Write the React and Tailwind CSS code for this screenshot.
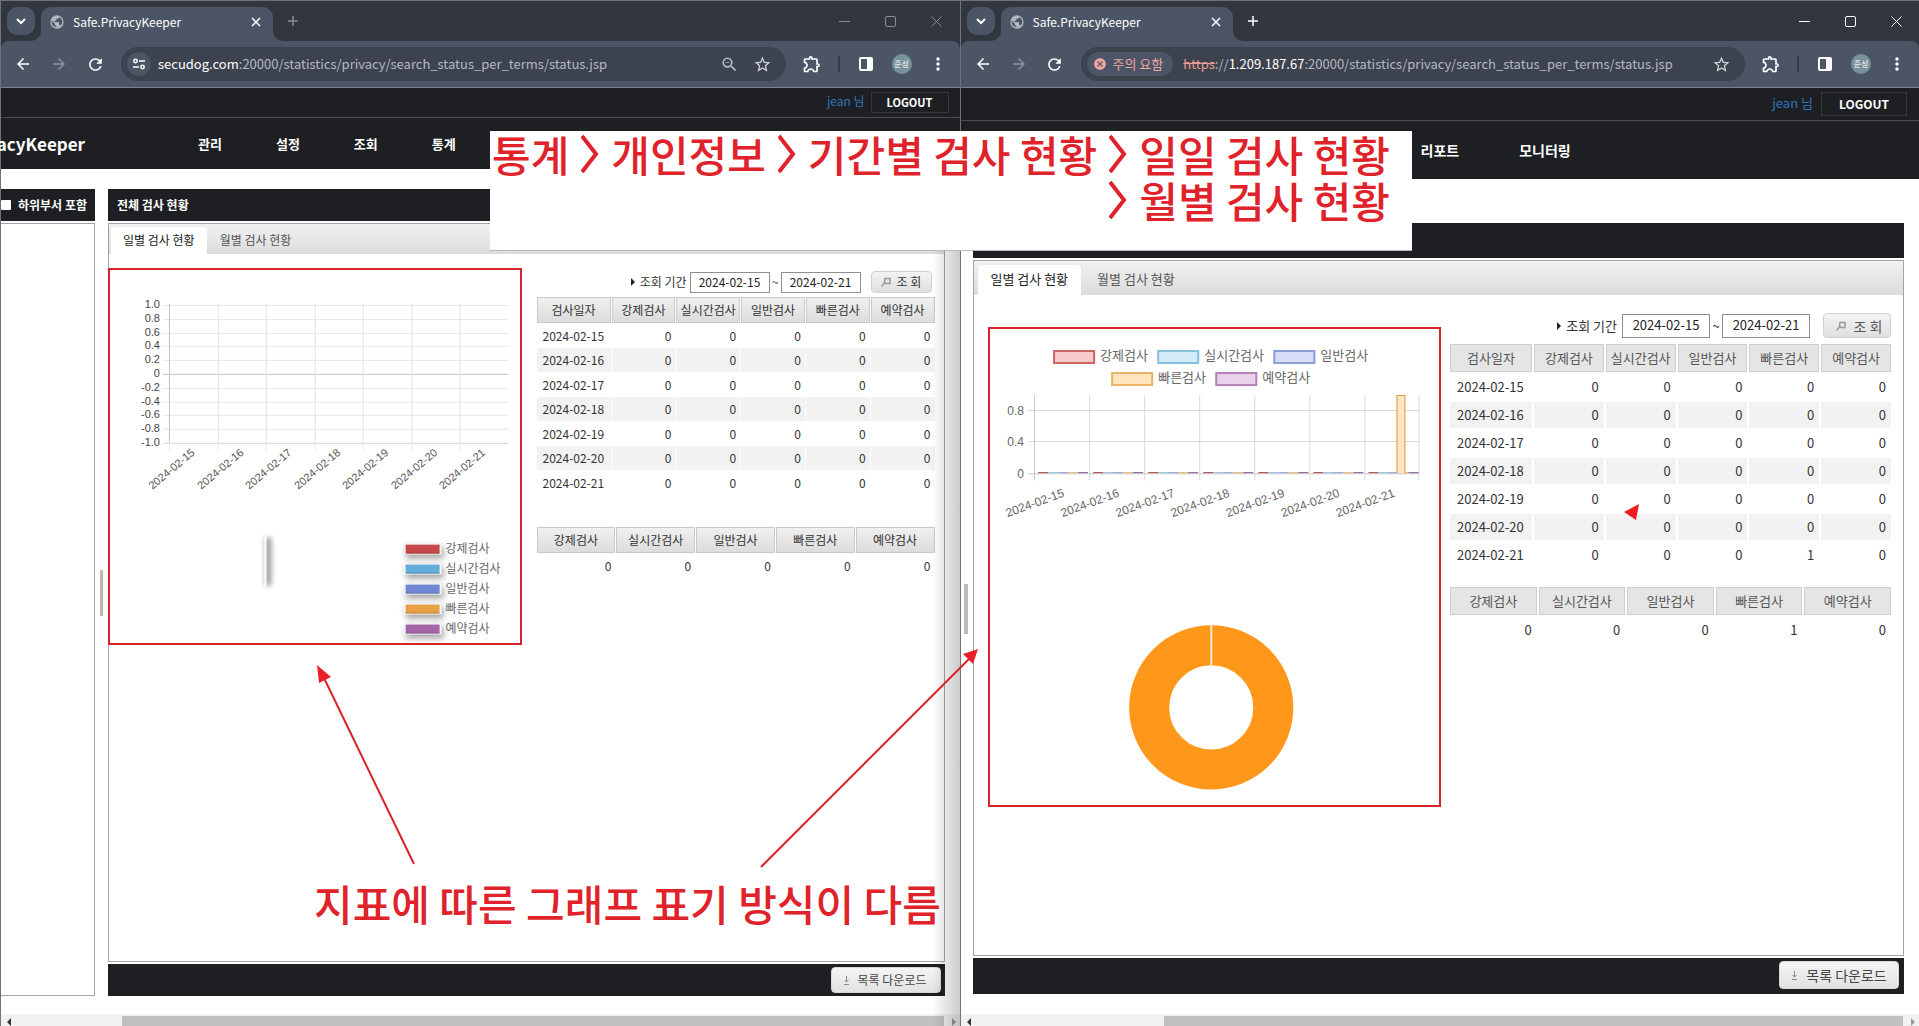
import { useState } from "react";
import { clsx } from "clsx";
import {
  MdArrowBack,
  MdArrowForward,
  MdRefresh,
  MdStarBorder,
  MdZoomOut,
  MdMoreVert,
  MdOutlineExtension,
  MdCancel,
} from "react-icons/md";

const dates = [
  "2024-02-15",
  "2024-02-16",
  "2024-02-17",
  "2024-02-18",
  "2024-02-19",
  "2024-02-20",
  "2024-02-21",
];

const scanTypes = ["강제검사", "실시간검사", "일반검사", "빠른검사", "예약검사"];

const oldColors = ["#c8474a", "#62add9", "#7088d4", "#e8a044", "#a566a8"];

const newColors = [
  { fill: "#f9cccc", stroke: "#cc6666" },
  { fill: "#d4ecfa", stroke: "#86c0dc" },
  { fill: "#d6def6", stroke: "#8b9cd6" },
  { fill: "#ffe4bd", stroke: "#eab264" },
  { fill: "#ead3ea", stroke: "#b480b8" },
];

const TabShape = () => (
  <>
    <svg viewBox="0 0 10 10" className="absolute bottom-0 -left-2.5 size-2.5 fill-[#4c5565]">
      <path d="M10 0v10H0A10 10 0 0 0 10 0z" />
    </svg>
    <svg viewBox="0 0 10 10" className="absolute -right-2.5 bottom-0 size-2.5 fill-[#4c5565]">
      <path d="M0 0v10h10A10 10 0 0 1 0 0z" />
    </svg>
  </>
);

const BrowserChrome = ({ active, children, tools }) => (
  <div className="bg-[#32363f] text-white">
    <div className="flex h-10 pl-1.5 pt-1.5">
      <button
        aria-label="탭 검색"
        className="flex size-7 items-center justify-center rounded-[10px] bg-[#4c5565]"
      >
        <svg viewBox="0 0 10 10" className="size-2.5 fill-none stroke-white stroke-2">
          <path d="M1 3l4 4 4-4" />
        </svg>
      </button>
      <div className="relative ml-1.5 flex h-[34px] w-[232px] items-center rounded-t-[10px] bg-[#4c5565] pb-1 pl-2 pr-3">
        <TabShape />
        <svg viewBox="0 0 24 24" className="size-4 fill-[#b1b6bf]">
          <path d="M12 2a10 10 0 1 0 0 20 10 10 0 0 0 0-20zm-1 17.9A8 8 0 0 1 4.2 10.200L9 15v1a2 2 0 0 0 2 2zm6.900-2.500A2 2 0 0 0 16 16h-1v-3a1 1 0 0 0-1-1H8v-2h2a1 1 0 0 0 1-1V7h2a2 2 0 0 0 2-2v-.4a8 8 0 0 1 2.900 12.800z" />
        </svg>
        <span className="ml-2 flex-1 text-xs">Safe.PrivacyKeeper</span>
        <button aria-label="탭 닫기">
          <svg viewBox="0 0 10 10" className="size-2.5 fill-none stroke-white stroke-[1.5]">
            <path d="M1 1l8 8M9 1l-8 8" />
          </svg>
        </button>
      </div>
      <button aria-label="새 탭" className="ml-3.5 flex h-7 items-center">
        <svg
          viewBox="0 0 12 12"
          className={clsx(
            "size-3 fill-none stroke-[1.5]",
            active ? "stroke-white" : "stroke-[#878b93]"
          )}
        >
          <path d="M6 1v10M1 6h10" />
        </svg>
      </button>
      <div
        className={clsx(
          "ml-auto flex h-7 fill-none",
          active ? "stroke-white" : "stroke-[#8a8e97]"
        )}
      >
        <button aria-label="최소화" className="flex w-[46px] items-center justify-center">
          <svg viewBox="0 0 11 11" className="size-[11px]">
            <path d="M0 5.500h11" />
          </svg>
        </button>
        <button aria-label="최대화" className="flex w-[46px] items-center justify-center">
          <svg viewBox="0 0 11 11" className="size-[11px]">
            <rect x="0.500" y="0.500" width="10" height="10" rx="1.500" />
          </svg>
        </button>
        <button aria-label="닫기" className="flex w-[46px] items-center justify-center">
          <svg viewBox="0 0 11 11" className="size-[11px]">
            <path d="M0.500 0.500l10 10M10.500 0.500l-10 10" />
          </svg>
        </button>
      </div>
    </div>
    <div className="flex h-[47px] items-center rounded-t-lg border-b border-[#7d828b] bg-[#4c5565] px-1">
      <button aria-label="뒤로" className="flex w-9 justify-center">
        <MdArrowBack className="size-[18px]" />
      </button>
      <button aria-label="앞으로" className="flex w-9 justify-center text-[#8b919c]">
        <MdArrowForward className="size-[18px]" />
      </button>
      <button aria-label="새로고침" className="flex w-9 justify-center">
        <MdRefresh className="size-[19px]" />
      </button>
      <div className="mx-2 flex h-[34px] min-w-0 flex-1 items-center rounded-full bg-[#3c424e] px-1.5 text-[13px] text-[#b4b9c3]">
        {children}
        <div className="ml-auto flex items-center gap-3.5 pr-2">
          {tools}
          <button aria-label="북마크">
            <MdStarBorder className="size-[19px] text-[#d0d3d9]" />
          </button>
        </div>
      </div>
      <button aria-label="확장 프로그램" className="flex w-9 justify-center">
        <MdOutlineExtension className="size-5" />
      </button>
      <span className="mx-2 h-4 w-0.5 bg-[#343a46]" />
      <button aria-label="측면 패널" className="flex w-9 justify-center">
        <svg viewBox="0 0 14 14" className="size-3.5">
          <rect x="1" y="1" width="12" height="12" rx="1" className="fill-none stroke-white stroke-2" />
          <path d="M8 1h5v12H8z" fill="#fff" />
        </svg>
      </button>
      <button aria-label="프로필" className="flex w-9 justify-center">
        <span className="flex size-5 items-center justify-center rounded-full bg-[#78929c] text-[8px]">
          준성
        </span>
      </button>
      <button aria-label="메뉴" className="flex w-9 justify-center">
        <MdMoreVert className="size-5" />
      </button>
    </div>
  </div>
);

const UserBar = ({ large }) => (
  <div
    className={clsx(
      "flex justify-end border-b border-[#4b4c4f] pt-1",
      large ? "h-[33px] gap-2 pr-3 text-[13px]" : "h-[30px] gap-1.5 pr-[11px] text-xs"
    )}
  >
    <span className={clsx("text-[#2e74bd]", large ? "leading-[22px]" : "leading-[18px]")}>
      jean 님
    </span>
    <button
      className={clsx(
        "border border-[#35373b] font-bold text-white",
        large ? "h-6 w-[86px] text-xs" : "h-[21px] w-[78px] text-[11px]"
      )}
    >
      LOGOUT
    </button>
  </div>
);

const Tabs = ({ large }) => {
  const [tab, setTab] = useState("일별 검사 현황");

  return (
    <div
      className={clsx(
        "flex items-end bg-linear-to-b from-[#f1f1f1] to-[#dcdcdc]",
        large ? "h-[34px] gap-[3px] pl-1 text-[13px]" : "h-[30px] gap-px pl-0.5 text-xs"
      )}
    >
      {["일별 검사 현황", "월별 검사 현황"].map((name) => (
        <button
          key={name}
          onClick={() => setTab(name)}
          className={clsx(
            "rounded-t pb-0.5",
            large ? "h-[30px] px-[13px]" : "h-[27px] px-3",
            tab === name ? "bg-white text-[#222]" : "text-[#555]"
          )}
        >
          {name}
        </button>
      ))}
    </div>
  );
};

const SearchBar = ({ large }) => {
  const id = large ? "new" : "old";
  const input = clsx(
    "border border-[#8f8f8f] bg-white pb-0.5 text-center text-[#222] outline-none",
    large ? "h-6 w-[88px]" : "h-[21px] w-20"
  );

  return (
    <form
      className={clsx(
        "flex items-center justify-end text-[#333]",
        large ? "mb-1 mr-0.5 h-[25px] text-[13px]" : "mb-1 mr-1 h-[22px] text-xs"
      )}
      onSubmit={(e) => e.preventDefault()}
    >
      <svg viewBox="0 0 4 8" className="mr-[5px] h-2 w-1 fill-[#222]">
        <path d="M0 0l4 4-4 4z" />
      </svg>
      <label htmlFor={`${id}-from`} className={large ? "mr-[5px]" : "mr-[3px]"}>
        조회 기간
      </label>
      <input id={`${id}-from`} defaultValue="2024-02-15" className={input} />
      <span className={large ? "w-3 text-center" : "w-[11px] text-center"}>~</span>
      <input aria-label="종료일" defaultValue="2024-02-21" className={input} />
      <button
        className={clsx(
          "flex items-center justify-center rounded border border-[#d2d2d2] bg-linear-to-b from-[#f3f3f3] to-[#dfdfdf]",
          large
            ? "ml-[13px] h-[25px] w-[68px] gap-2 pl-1 text-sm text-[#555]"
            : "ml-2.5 h-[22px] w-[61px] gap-1.5 text-xs"
        )}
      >
        <svg viewBox="0 0 10 10" className="size-2.5 fill-none stroke-[#999] stroke-[1.5]">
          <path d="M4 1.500h5v5H5L3.500 5z M3.500 6L0.500 9.500" />
        </svg>
        조 회
      </button>
    </form>
  );
};

const headCell = (large) =>
  clsx(
    "border font-normal",
    large
      ? "h-7 border-[#cfcfcf] bg-[#e5e5e5] text-[#555]"
      : "h-[26px] border-[#c9c9c9] bg-linear-to-b from-[#f0f0f0] to-[#dcdcdc] text-[#333]"
  );

const DailyTable = ({ large, rows }) => (
  <table
    className={clsx(
      "w-full table-fixed border-separate whitespace-nowrap text-[#333]",
      large ? "border-spacing-[2px] text-[13px]" : "border-spacing-x-[1px] border-spacing-y-0 text-xs"
    )}
  >
    <thead>
      <tr>
        <th className={clsx(headCell(large), large ? "w-[82px]" : "w-[74px]")}>검사일자</th>
        {scanTypes.map((type) => (
          <th key={type} className={headCell(large)}>
            {type}
          </th>
        ))}
      </tr>
    </thead>
    <tbody>
      {rows.map((row) => (
        <tr
          key={row.date}
          className={clsx("even:*:bg-[#f2f2f2]", large ? "h-[26px]" : "h-6 odd:h-[25px]")}
        >
          <td className={large ? "pl-[7px]" : "pl-1.5"}>{row.date}</td>
          {row.counts.map((count, i) => (
            <td key={scanTypes[i]} className={clsx("text-right", large ? "pr-[5px]" : "pr-1")}>
              {count}
            </td>
          ))}
        </tr>
      ))}
    </tbody>
  </table>
);

const TotalTable = ({ large, counts }) => (
  <table
    className={clsx(
      "w-full table-fixed border-separate whitespace-nowrap text-[#333]",
      large
        ? "mt-[15px] border-spacing-[2px] text-[13px]"
        : "mt-8 border-spacing-x-[1px] border-spacing-y-0 text-xs"
    )}
  >
    <thead>
      <tr>
        {scanTypes.map((type) => (
          <th key={type} className={headCell(large)}>
            {type}
          </th>
        ))}
      </tr>
    </thead>
    <tbody>
      <tr className={large ? "h-[26px]" : "h-[25px]"}>
        {counts.map((count, i) => (
          <td key={scanTypes[i]} className={clsx("text-right", large ? "pr-[5px]" : "pr-1")}>
            {count}
          </td>
        ))}
      </tr>
    </tbody>
  </table>
);

// Old server: empty line chart with an empty pie below
const OldChart = () => (
  <svg viewBox="0 0 410 373" className="w-full font-['Liberation_Sans']">
    <defs>
      <filter id="soft" x="-50%" y="-80%" width="200%" height="260%">
        <feGaussianBlur stdDeviation="3" />
      </filter>
      <filter id="pieShadow" x="-300%" y="-20%" width="700%" height="140%">
        <feGaussianBlur stdDeviation="2.500" />
      </filter>
    </defs>
    {Array.from({ length: 11 }, (_, i) => {
      const y = 35.5 + Math.round(i * 13.8);
      const value = (10 - i * 2) / 10;
      return (
        <g key={i}>
          <path
            d={`M53 ${y}H399`}
            stroke={i === 5 ? "#c4c4c4" : i === 10 ? "#d2d2d2" : "#e8e8e8"}
          />
          <text x="50" y={y + 3} textAnchor="end" fontSize="11" fill="#444">
            {value === 0 ? "0" : value.toFixed(1)}
          </text>
        </g>
      );
    })}
    {dates.map((date, i) => {
      const x = 59.5 + Math.round(i * 48.5);
      return (
        <g key={date}>
          <path d={`M${x} 34V173`} stroke={i === 0 ? "#c4c4c4" : "#e2e2e2"} />
          <path d={`M${x} 173V182`} stroke="#ececec" />
          <text
            transform={`translate(${x + 26} 184) rotate(-40)`}
            textAnchor="end"
            fontSize="11"
            fill="#555"
          >
            {date}
          </text>
        </g>
      );
    })}
    <rect x="155" y="268" width="7" height="48" fill="#000" opacity="0.350" filter="url(#pieShadow)" />
    <path d="M155.500 265v52" stroke="#fff" strokeWidth="2" />
    {scanTypes.map((type, i) => {
      const y = 275 + i * 20;
      return (
        <g key={type}>
          <rect x="296" y={y + 2} width="38" height="12" fill="#000" opacity="0.350" filter="url(#soft)" />
          <rect x="294" y={y - 1} width="38" height="11" fill="#f2f4f8" />
          <rect x="296" y={y} width="34" height="9" fill={oldColors[i]} />
          <path d={`M296 ${y + 8.500}h34`} stroke="#000" opacity="0.200" />
          <text
            x="336"
            y={y + 8}
            fontSize="12"
            fill="#666"
            className="font-['Noto_Sans_CJK_KR']"
          >
            {type}
          </text>
        </g>
      );
    })}
  </svg>
);

const legendSpots = [
  { x: 63, y: 21 },
  { x: 167, y: 21 },
  { x: 283, y: 21 },
  { x: 121, y: 43 },
  { x: 225, y: 43 },
];

// New server: bar chart with a doughnut below
const NewChart = () => (
  <svg viewBox="0 0 449 475" className="w-full font-['Liberation_Sans']">
    {scanTypes.map((type, i) => (
      <g key={type}>
        <rect
          x={legendSpots[i].x + 1}
          y={legendSpots[i].y + 1}
          width="40"
          height="12"
          fill={newColors[i].fill}
          stroke={newColors[i].stroke}
          strokeWidth="2"
        />
        <text
          x={legendSpots[i].x + 47}
          y={legendSpots[i].y + 10}
          fontSize="13"
          fill="#666"
          className="font-['Noto_Sans_CJK_KR']"
        >
          {type}
        </text>
      </g>
    ))}
    {["0.8", "0.4", "0"].map((value, i) => {
      const y = [81.5, 112.5, 144.5][i];
      return (
        <g key={value}>
          <path d={`M38 ${y}H429`} stroke={value === "0" ? "#c8c8c8" : "#dadada"} />
          <text x="34" y={y + 4} textAnchor="end" fontSize="12" fill="#666">
            {value}
          </text>
        </g>
      );
    })}
    {Array.from({ length: 8 }, (_, i) => (
      <path
        key={i}
        d={`M${Math.min(44.5 + i * 55, 428.5)} 66v85`}
        stroke={i === 0 ? "#c8c8c8" : "#dadada"}
      />
    ))}
    {dates.map((date, i) => (
      <g key={date}>
        {newColors.map((color, j) => (
          <path
            key={color.stroke}
            d={`M${48 + i * 55 + j * 10} 143.500h10`}
            stroke={j === 0 ? "#a83c3c" : j === 4 ? "#7a5a8c" : color.stroke}
          />
        ))}
        <text
          transform={`translate(${75 + i * 55} 167) rotate(-20)`}
          textAnchor="end"
          fontSize="12"
          fill="#666"
        >
          {date}
        </text>
      </g>
    ))}
    <path d="M406.500 144V66.500h8V144" fill="#fde5c6" stroke="#dc9a30" />
    <circle cx="221" cy="378" r="62" fill="none" stroke="#ff981a" strokeWidth="40" />
    <path d="M221 296v40" stroke="#ffeed2" strokeWidth="2" />
  </svg>
);

const DownloadBar = ({ large }) => (
  <div
    className={clsx(
      "mt-0.5 flex items-center justify-end bg-[#1e1f22]",
      large ? "h-9 pb-0.5 pr-[5px]" : "h-8 pr-1"
    )}
  >
    <button
      className={clsx(
        "flex items-center justify-center rounded border border-[#d8d8d8] bg-linear-to-b from-[#f4f4f4] to-[#e2e2e2] text-[#444]",
        large ? "h-7 w-[120px] gap-2 text-sm" : "h-[26px] w-[110px] gap-2 pr-0.5 text-xs"
      )}
    >
      <svg viewBox="0 0 7 9" className="h-[9px] w-[7px] fill-none stroke-[#888]">
        <path d="M3.500 0v6M1.500 4l2 2 2-2M1 8.500h5" />
      </svg>
      목록 다운로드
    </button>
  </div>
);

const ScrollBar = ({ large }) => (
  <div className="flex h-3 items-end bg-[#f1f1f1]">
    <svg viewBox="0 0 4 8" className="ml-1.5 h-2 w-1 fill-[#333]">
      <path d="M4 0L0 4l4 4z" />
    </svg>
    <div className={clsx("mr-2 h-2.5 flex-1 bg-[#c1c1c1]", large ? "ml-[193px]" : "ml-[111px]")} />
    <svg viewBox="0 0 4 8" className="mr-1 h-2 w-1 fill-[#999]">
      <path d="M0 0l4 4-4 4z" />
    </svg>
  </div>
);

const OldWindow = () => (
  <section className="relative flex min-w-0 flex-col border-l border-t border-[#6f7278]">
    <BrowserChrome
      tools={
        <button aria-label="확대/축소">
          <MdZoomOut className="size-[19px] text-[#b4b9c3]" />
        </button>
      }
    >
      <span className="flex size-6 items-center justify-center rounded-full bg-[#4c5565]">
        <svg viewBox="0 0 12 12" className="size-3 fill-none stroke-white stroke-[1.5]">
          <circle cx="2.500" cy="3" r="1.700" />
          <path d="M6 3h6M0 9h6" />
          <circle cx="9.500" cy="9" r="1.700" />
        </svg>
      </span>
      <span className="ml-[7px] whitespace-nowrap">
        <span className="text-white">secudog.com</span>
        :20000/statistics/privacy/search_status_per_terms/status.jsp
      </span>
    </BrowserChrome>

    <header className="h-[81px] bg-[#1e1f22] text-white">
      <UserBar />
      <div className="flex h-[51px] items-center">
        <div className="flex w-[84px] justify-end text-[17px] font-bold">acyKeeper</div>
        <nav className="ml-[113px] flex gap-[54px] text-[13px] font-bold">
          <a href="#manage">관리</a>
          <a href="#settings">설정</a>
          <a href="#search">조회</a>
          <a href="#stats">통계</a>
        </nav>
      </div>
    </header>

    <div className="mb-[18px] mt-5 flex flex-1 pr-[15px]">
      <aside className="flex w-[94px] flex-col">
        <label className="flex h-8 items-center gap-[7px] whitespace-nowrap bg-[#1e1f22] text-xs font-bold text-white">
          <input type="checkbox" className="size-2.5 appearance-none rounded-[1px] bg-white" />
          하위부서 포함
        </label>
        <div className="mt-0.5 flex-1 border-y border-r border-[#a3a3a3]" />
      </aside>
      <div className="flex w-[13px] items-center justify-center">
        <span className="h-[46px] w-[3px] bg-[#bcb9b4]" />
      </div>
      <main className="flex min-w-0 flex-1 flex-col">
        <h1 className="flex h-8 items-center bg-[#1e1f22] pl-[9px] text-xs font-bold text-white">
          전체 검사 현황
        </h1>
        <div className="mt-0.5 flex-1 border border-[#a3a3a3]">
          <Tabs />
          <div className="flex items-start pr-2">
            <div className="-ml-px mr-3.5 mt-3.5 min-w-0 flex-1 border-2 border-[#d8232a]">
              <OldChart />
            </div>
            <div className="mt-[17px] w-[400px] shrink-0">
              <SearchBar />
              <DailyTable rows={dates.map((date) => ({ date, counts: [0, 0, 0, 0, 0] }))} />
              <TotalTable counts={[0, 0, 0, 0, 0]} />
            </div>
          </div>
        </div>
        <DownloadBar />
      </main>
    </div>
    <ScrollBar />
    <div className="pointer-events-none absolute bottom-0 right-0 top-[250px] w-7 bg-linear-to-r from-transparent to-black/20" />
  </section>
);

const NewWindow = () => (
  <section className="flex min-w-0 flex-col border-l border-t border-[#6f7278]">
    <BrowserChrome active>
      <span className="flex h-6 items-center gap-1.5 whitespace-nowrap rounded-full bg-[#4c5565] pl-1.5 pr-2.5 text-[#eda79f]">
        <MdCancel className="size-3.5" />
        주의 요함
      </span>
      <span className="ml-2.5 whitespace-nowrap">
        <span className="text-[#eb9c94] line-through">https</span>://
        <span className="text-white">1.209.187.67</span>
        :20000/statistics/privacy/search_status_per_terms/status.jsp
      </span>
    </BrowserChrome>

    <header className="h-[91px] bg-[#1e1f22] text-white">
      <UserBar large />
      <nav className="flex h-[58px] items-center gap-[60px] pl-[460px] text-sm font-bold">
        <a href="#report">리포트</a>
        <a href="#monitoring">모니터링</a>
      </nav>
    </header>

    <div className="mb-5 mt-11 flex flex-1 pr-[15px]">
      <div className="flex w-3 items-center pl-[3px]">
        <span className="h-[50px] w-1 bg-[#bbb]" />
      </div>
      <main className="flex min-w-0 flex-1 flex-col">
        <div className="h-[35px] bg-[#1e1f22]" />
        <div className="mt-0.5 flex-1 border border-[#a3a3a3]">
          <Tabs large />
          <div className="flex items-start pr-[10px]">
            <div className="ml-3.5 mr-[7px] mt-8 min-w-0 flex-1 border-2 border-[#d8232a]">
              <NewChart />
            </div>
            <div className="mt-[18px] w-[445px] shrink-0">
              <SearchBar large />
              <DailyTable
                large
                rows={dates.map((date, i) => ({ date, counts: [0, 0, 0, i === 6 ? 1 : 0, 0] }))}
              />
              <TotalTable large counts={[0, 0, 0, 1, 0]} />
            </div>
          </div>
        </div>
        <DownloadBar large />
      </main>
    </div>
    <ScrollBar large />
  </section>
);

const Chevron = () => (
  <svg viewBox="0 0 18 38" className="h-[38px] w-[18px] fill-none stroke-[#e0222b] stroke-[4]">
    <path d="M1 1l14 18L1 37" />
  </svg>
);

// Red notes on top of both windows
const Notes = () => (
  <div className="pointer-events-none absolute inset-0 overflow-hidden text-[42px] font-medium leading-[46px] text-[#e0222b]">
    <div className="absolute left-[490px] top-[131px] flex h-[120px] w-[922px] flex-col items-end whitespace-nowrap border-b border-[#bbb] bg-white pr-[22px]">
      <p className="flex items-center gap-3">
        통계 <Chevron /> 개인정보 <Chevron /> 기간별 검사 현황 <Chevron /> 일일 검사 현황
      </p>
      <p className="flex items-center gap-3">
        <Chevron /> 월별 검사 현황
      </p>
    </div>
    <p className="absolute left-[314px] top-[880px] whitespace-nowrap">
      지표에 따른 그래프 표기 방식이 다름
    </p>
    <svg viewBox="0 0 100 202" className="absolute left-[316px] top-[664px] h-[202px] w-[100px]">
      <path d="M98 200L8 14" stroke="#d8232a" strokeWidth="2" />
      <path d="M1 1l14 12-12 6z" fill="#e81f29" />
    </svg>
    <svg viewBox="0 0 220 220" className="absolute left-[760px] top-[648px] size-[220px]">
      <path d="M1 219L210 10" stroke="#d8232a" strokeWidth="2" />
      <path d="M218 1l-15 5 10 10z" fill="#e81f29" />
    </svg>
    <svg viewBox="0 0 15 16" className="absolute left-[1624px] top-[504px] h-4 w-[15px]">
      <path d="M0 8L15 0l-3 16z" fill="#ee1c25" />
    </svg>
  </div>
);

const App = () => {
  return (
    <div className="relative grid min-h-screen grid-cols-2 bg-white font-['Noto_Sans_CJK_KR',sans-serif]">
      <OldWindow />
      <NewWindow />
      <Notes />
    </div>
  );
};

export default App;
